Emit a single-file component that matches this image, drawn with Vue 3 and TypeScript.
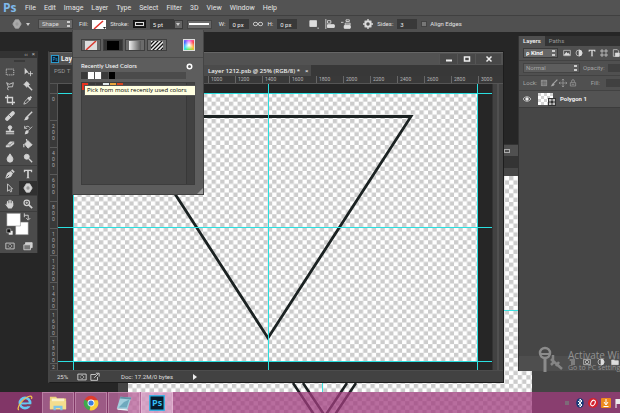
<script setup lang="ts">
import { ref } from 'vue'

const menus: string[] = ['File', 'Edit', 'Image', 'Layer', 'Type', 'Select', 'Filter', '3D', 'View', 'Window', 'Help']

const shapeMode = ref('Shape')
const strokeWidth = ref('5 pt')
const shapeW = ref('0 px')
const shapeH = ref('0 px')
const sides = ref('3')
const alignEdges = ref(false)
const layerKind = ref('Kind')
const blendMode = ref('Normal')

const icons: Record<string, string> = {
  marquee: '<path d="M1.5 2.5h9v7h-9z" stroke-dasharray="1.5 1"/>',
  move: '<path d="M2 1v8l2-2h3z" fill="currentColor" stroke="none"/><path d="M9 5v6M6 8h6"/>',
  lasso: '<path d="M2 2l3 2 5-2-1 5H4L2 2M4 7l-1 2 1 2"/>',
  wand: '<path d="M6 6l5 5" stroke-width="1.6"/><circle cx="4.500" cy="4" r="2.500" fill="currentColor"/><path d="M4.500 0v8M.5 4h8"/>',
  crop: '<path d="M3 0v9h9M0 3h9v9" stroke-width="1.600"/>',
  dropper: '<path d="M1 11l1-3 4-4 2 2-4 4z"/><path d="M6 3l3 3M7.500 4.500L10 2" stroke-width="2.500"/>',
  heal: '<path d="M2.500 9.500l7-7" stroke-width="4.500" stroke-linecap="round"/><path d="M5 5l2 2" stroke="#4b4b4b"/>',
  brush: '<path d="M11 1L5 7" stroke-width="1.700"/><path d="M5 6l2 2c-1 3-4 3-6 3 2-1 1-4 4-5z" fill="currentColor" stroke="none"/>',
  stamp: '<circle cx="6" cy="3" r="2.200" fill="currentColor"/><path d="M5 4h2v3h4v2H1V7h4zM1 10h10v1H1z" fill="currentColor" stroke="none"/>',
  history: '<path d="M11 2L6 7M2 4c1-3 5-3 6-1M2 1v3h3"/><path d="M5 6l2 2c-1 3-4 3-5 3 1-1 0-4 3-5z" fill="currentColor" stroke="none"/>',
  eraser: '<path d="M1 8l5-5h5v3L6 10H1z" fill="currentColor" stroke="none"/><path d="M1 7h5l5-4M6 7v3" stroke="#666" stroke-width=".7"/>',
  bucket: '<path d="M2 6l4-4 5 5-5 4z" fill="currentColor"/><path d="M4 0l2 6M1 6v4" stroke-width="1.400"/>',
  blur: '<path d="M6 1c2 3 3.500 4.500 3.500 6.500a3.500 3.500 0 0 1-7 0C2.500 5.500 4 4 6 1z" fill="currentColor"/>',
  dodge: '<circle cx="4.500" cy="4.500" r="3" fill="currentColor"/><path d="M7 7l4 4" stroke-width="1.600"/>',
  pen: '<path d="M1 11l2-6 4-2 2 2-2 4z" fill="currentColor"/><path d="M8 1l3 3" stroke-width="2"/><path d="M2 10l3-3" stroke="#444"/>',
  type: '<path d="M1 1h10v3h-1L9 2.500H7V10l1 1H4l1-1V2.500H3L2 4H1z" fill="currentColor" stroke="none"/>',
  arrow: '<path d="M3 1v9l2-2 2 3 1-1-1-3h2z"/>',
  polygon: '<path d="M4 1h4l3 5-3 5H4L1 6z" fill="currentColor"/><circle cx="6" cy="6" r="2" fill="#999" stroke="none"/>',
  hand: '<path d="M3 6V3M5 6V1.500M7 6V1.500M9 6V3" stroke-width="1.400" stroke-linecap="round"/><path d="M0 6l2 1V5h8v3L8 11.500H4z" fill="currentColor" stroke="none"/>',
  zoom: '<circle cx="4.500" cy="4.500" r="3.300" stroke-width="1.500"/><path d="M7 7l4 4" stroke-width="2"/><path d="M3 4.500h3M4.500 3v3"/>',
  mask: '<path d="M1 2.500h10v7H1z"/><circle cx="6" cy="6" r="2" stroke-dasharray="1 .7"/>',
  screen: '<path d="M3 2h8v6H3z" fill="currentColor"/><path d="M1 4.500h8v6H1z" fill="#777"/>',
  link: '<rect x="0.500" y="4" width="5" height="4" rx="2"/><rect x="6.500" y="4" width="5" height="4" rx="2"/>',
  ops: '<path d="M1 2h8v7H1z" fill="currentColor"/><path d="M10 11h2" />',
  align: '<path d="M1 0v12M3 2h4v3H3zM3 7h8v3H3z"/><path d="M3 7h8v3H3z" fill="currentColor"/>',
  arrange: '<path d="M0 4h3M6 1h4v2H6zM5 5h6v2H5zM4 8h7v3H4z"/><path d="M4 8h7v3H4z" fill="currentColor"/>',
  gear: '<circle cx="6" cy="6" r="3.300" stroke-width="2.400"/><path d="M6 0v2M6 10v2M0 6h2M10 6h2M2 2l1 1M9 9l1 1M10 2L9 3M3 9l-1 1" stroke-width="1.600"/>',
  image: '<path d="M1 2h10v8H1z"/><path d="M2 9l3-4 2 2 1-1 2 3z" fill="currentColor"/>',
  adjust: '<circle cx="6" cy="6" r="4.500"/><path d="M6 1.500a4.500 4.500 0 0 1 0 9z" fill="currentColor"/>',
  frame: '<path d="M3 0v12M9 0v12M0 3h12M0 9h12"/>',
  smart: '<path d="M2 1h6l2 2v8H2z"/><path d="M5 6h6v5H5z" fill="currentColor"/>',
  pixels: '<path d="M2 2h8v8H2z" fill="#8a8a8a"/><path d="M2 5h8M2 7.500h8M5 2v8M7.500 2v8" stroke="#555" stroke-width=".6"/>',
  lockmove: '<path d="M6 0v12M0 6h12M4.500 2L6 0l1.500 2M4.500 10L6 12l1.500-2M2 4.500L0 6l2 1.500M10 4.500L12 6l-2 1.500"/>',
  lock: '<path d="M2 5.500h8v5H2z"/><path d="M4 5V3a2 2 0 0 1 4 0v2M4 8h4" />',
  eye: '<path d="M0 6c3-4.500 9-4.500 12 0-3 4.500-9 4.500-12 0z"/><circle cx="6" cy="6" r="2" fill="currentColor"/>',
}

const toolGroups: string[][] = [
  ['marquee', 'move', 'lasso', 'wand', 'crop', 'dropper'],
  ['heal', 'brush', 'stamp', 'history', 'eraser', 'bucket', 'blur', 'dodge'],
  ['pen', 'type', 'arrow', 'polygon'],
  ['hand', 'zoom'],
]

const topMarks: number[] = Array.from({ length: 16 }, (_, i) => i * 200)
const sideMarks: string[][] = [...Array.from({ length: 10 }, (_, i) => String(i * 200).split('')), ['2']]
const guidesX: number[] = [15, 210, 419]
const guidesY: number[] = [9, 143, 277]
const recent: string[] = ['#383838', '#ffffff', '#ffffff', '#3a3a3a', '#000000']
const preset: string[] = ['#e8321f', '#3a3a3a', '#3a3a3a', '#dfe8ea', '#e9a43a', '#d8441f']
</script>

<template>
  <div class="app">
    <nav class="menubar">
      <span class="logo">Ps</span>
      <button v-for="m in menus" :key="m" class="menu">{{ m }}</button>
    </nav>

    <div class="options">
      <button class="tool-current" aria-label="Polygon tool">
        <svg class="ico" viewBox="0 0 12 12" v-html="icons.polygon" /><i class="caret" />
      </button>
      <select v-model="shapeMode" class="mode updown" aria-label="Tool mode"><option>Shape</option></select>
      <span class="lab">Fill:</span>
      <button class="fill" aria-label="Fill colour"><svg viewBox="0 0 14 9"><path d="M2 9L11 1" stroke="#e0322a" stroke-width="1.500" /><path d="M11 7h3l-1.500 2z" fill="#222" /></svg></button>
      <span class="lab">Stroke:</span>
      <button class="stroke" aria-label="Stroke colour"><i /></button>
      <input v-model="strokeWidth" class="field wide" aria-label="Stroke width" />
      <button class="drop" aria-label="Stroke width presets"><i class="caret" /></button>
      <button class="line" aria-label="Stroke type"><i /></button>
      <label class="lab size" for="w">W:</label>
      <input id="w" v-model="shapeW" class="field" />
      <svg class="ico link" viewBox="0 0 12 12" v-html="icons.link" />
      <label class="lab" for="h">H:</label>
      <input id="h" v-model="shapeH" class="field" />
      <span class="ops">
        <button v-for="n in ['ops', 'align', 'arrange']" :key="n" :aria-label="n"><svg class="ico" viewBox="0 0 12 12" v-html="icons[n]" /></button>
      </span>
      <button class="gearbtn" aria-label="Settings"><svg class="ico" viewBox="0 0 12 12" v-html="icons.gear" /></button>
      <label class="lab" for="sides">Sides:</label>
      <input id="sides" v-model="sides" class="field" />
      <label class="lab check"><input v-model="alignEdges" type="checkbox" />Align Edges</label>
    </div>

    <main class="desk">
      <section class="back-window">
        <header><i /></header>
        <div class="back-tabs" />
        <div class="back-ruler" />
        <svg class="back-art" aria-hidden="true">
          <defs>
            <pattern id="checkB" width="8.660" height="8.660" patternUnits="userSpaceOnUse">
              <rect width="9" height="9" fill="#fff" /><path d="M0 0h4.330v4.330H0zM4.330 4.330h4.330v4.330H4.330z" fill="#ccc" />
            </pattern>
          </defs>
          <rect width="100%" height="100%" fill="url(#checkB)" />
          <path d="M175 207L197 240L219 207M165 207L197 255M228 207L196 255" fill="none" stroke="#1b2122" stroke-width="2.500" />
          <path d="M194.500 207v9M376 134.500h14" stroke="#3fe0e0" />
        </svg>
      </section>

      <section class="doc">
        <header class="title">
          <svg class="psicon" viewBox="0 0 9 9"><rect x=".5" y=".5" width="8" height="8" fill="#0b1c2c" stroke="#2aa4dc" /><text x="2" y="6.500" font-size="5" fill="#38b8f0">Ps</text></svg>
          <b>Layer</b>
          <button class="wb" aria-label="Minimize"><svg viewBox="0 0 8 8"><path d="M1 5.500h6" stroke-width="2" /></svg></button>
          <button class="wb" aria-label="Maximize"><svg viewBox="0 0 8 8"><path d="M1.500 2h5v4h-5z" stroke-width="1.500" /></svg></button>
          <button class="wb close" aria-label="Close"><svg viewBox="0 0 8 8"><path d="M1.500 1.500l5 5M6.500 1.500l-5 5" stroke-width="1.500" /></svg></button>
        </header>
        <div class="tabs">
          <button class="tab first">PSD T</button>
          <button class="tab on">Layer 1212.psb @ 25% (RGB/8) *<span>×</span></button>
        </div>
        <div class="hruler"><i class="corner" /><span v-for="n in topMarks" :key="n">{{ n }}</span></div>
        <div class="view">
          <div class="vruler">
            <div v-for="(d, i) in sideMarks" :key="i"><span v-for="(c, j) in d" :key="j">{{ c }}</span></div>
          </div>
          <svg class="art" aria-hidden="true">
            <defs>
              <pattern id="checkA" x="15" y="9" width="8.660" height="8.660" patternUnits="userSpaceOnUse">
                <rect width="9" height="9" fill="#fff" /><path d="M0 0h4.330v4.330H0zM4.330 4.330h4.330v4.330H4.330z" fill="#ccc" />
              </pattern>
            </defs>
            <rect x="15" y="9" width="404" height="269" fill="url(#checkA)" />
            <path d="M67 32.500H353L210 254Z" fill="none" stroke="#1b2222" stroke-width="2.800" />
            <g fill="#2adfe0" shape-rendering="crispEdges">
              <rect v-for="y in guidesY" :key="'y' + y" x="0" :y="y" width="100%" height="1" />
              <rect v-for="x in guidesX" :key="'x' + x" :x="x" y="0" width="1" height="100%" />
            </g>
          </svg>
          <div class="vscroll"><i /></div>
        </div>
        <footer class="status">
          <span class="pct">25%</span>
          <svg class="ico" viewBox="0 0 12 12" v-html="icons.mask" />
          <svg class="ico" viewBox="0 0 12 12"><path d="M1 3h6M1 3v7h8V6M5 7l5-5M7 1.500h4v4" /></svg>
          <span class="size-info">Doc: 17.2M/0 bytes</span>
          <i class="play" />
        </footer>
      </section>

      <aside class="toolbox">
        <header><span>‹‹</span><span>×</span></header>
        <div class="grip" />
        <div v-for="(g, i) in toolGroups" :key="i" class="group">
          <button v-for="t in g" :key="t" :class="{ active: t === 'polygon' }" :aria-label="t">
            <svg class="ico" viewBox="0 0 12 12" v-html="icons[t]" />
          </button>
        </div>
        <svg class="swatches" viewBox="0 0 38 26">
          <path d="M16 10h13v13H16z" fill="#fff" stroke="#777" stroke-width=".5" />
          <path d="M7 1h14v13H7z" fill="#fff" stroke="#777" stroke-width=".5" />
          <path d="M25 3h4v4M25 1v4M27 6l2 2 2-2" fill="none" stroke="#ccc" />
          <path d="M9 19h4v4H9z" fill="#eee" /><path d="M7 17h4v4H7z" fill="#111" stroke="#ccc" stroke-width=".6" />
        </svg>
        <div class="group modes">
          <button aria-label="Quick mask"><svg class="ico" viewBox="0 0 12 12" v-html="icons.mask" /></button>
          <button aria-label="Screen mode"><svg class="ico" viewBox="0 0 12 12" v-html="icons.screen" /></button>
        </div>
      </aside>

      <section class="popup">
        <div class="kinds">
          <button aria-label="No color"><svg viewBox="0 0 12 9"><rect width="12" height="9" fill="#ddd" /><path d="M1 9L11 0" stroke="#d9392f" stroke-width="1.500" /></svg></button>
          <button class="on" aria-label="Solid color"><svg viewBox="0 0 12 9"><rect width="12" height="9" fill="#000" /></svg></button>
          <button aria-label="Gradient"><svg viewBox="0 0 12 9"><defs><linearGradient id="gr"><stop offset="0" stop-color="#eee" /><stop offset="1" stop-color="#555" /></linearGradient></defs><rect width="12" height="9" fill="url(#gr)" /></svg></button>
          <button aria-label="Pattern"><svg viewBox="0 0 12 9"><rect width="12" height="9" fill="#eee" /><path d="M-1 4L4-1M-1 8L8-1M1 10L12-1M5 10l8-8M9 10l4-4" stroke="#111" stroke-width="1.300" /></svg></button>
          <button class="picker" aria-label="Color picker"><i /></button>
        </div>
        <div class="recent-head"><span>Recently Used Colors</span><svg class="ico" viewBox="0 0 12 12"><circle cx="6" cy="6" r="3" stroke-width="2" /></svg></div>
        <div class="strip"><i v-for="(c, i) in recent" :key="i" :style="{ background: c }" /></div>
        <div class="list"><div class="cells"><i v-for="(c, i) in preset" :key="i" :style="{ background: c }" /></div><div class="bar" /></div>
        <div class="tooltip" role="tooltip">Pick from most recently used colors</div>
        <i class="grow" />
      </section>

      <aside class="layers">
        <div class="ptabs"><button class="on">Layers</button><button>Paths</button></div>
        <div class="prow filter">
          <select v-model="layerKind" class="updown" aria-label="Filter layers"><option value="Kind">ρ Kind</option></select>
          <button v-for="n in ['image', 'adjust', 'type', 'frame', 'smart']" :key="n" :aria-label="n"><svg class="ico" viewBox="0 0 12 12" v-html="icons[n]" /></button>
        </div>
        <div class="prow blend">
          <select v-model="blendMode" class="updown" aria-label="Blend mode"><option>Normal</option></select>
          <span>Opacity:</span><i class="dark" />
        </div>
        <div class="prow locks">
          <span>Lock:</span>
          <button v-for="n in ['pixels', 'brush', 'lockmove', 'lock']" :key="n" :aria-label="n"><svg class="ico" viewBox="0 0 12 12" v-html="icons[n]" /></button>
          <span class="fl">Fill:</span><i class="dark" />
        </div>
        <div class="layer">
          <svg class="ico" viewBox="0 0 12 12" v-html="icons.eye" />
          <svg class="thumb" viewBox="0 0 18 13">
            <rect width="15" height="12" fill="#fff" /><path d="M0 0h3v3H0zM6 0h3v3H6zM3 3h3v3H3zM9 3h3v3H9zM0 6h3v3H0zM6 6h3v3H6zM3 9h3v3H3zM9 9h3v3H9zM12 0h3v3h-3z" fill="#d4d4d4" />
            <rect x="10" y="5" width="8" height="8" fill="#333" /><path d="M12 7h4v4h-4z" fill="none" stroke="#ddd" stroke-width=".8" /><path d="M11 6h2v2h-2zM15 6h2v2h-2zM11 10h2v2h-2zM15 10h2v2h-2z" fill="#bbb" />
          </svg>
          <b>Polygon 1</b>
        </div>
        <div class="pfoot">
          <svg class="ico" viewBox="0 0 12 12"><path d="M1 3h8M3 6h6M3 9h6" /></svg>
          <svg class="ico" viewBox="0 0 12 12"><path d="M1 2h10v8H1z" /><circle cx="6" cy="6" r="2.500" /></svg>
          <svg class="ico" viewBox="0 0 12 12" v-html="icons.adjust" />
          <svg class="ico" viewBox="0 0 12 12"><path d="M1 3h4l1 1h5v6H1z" fill="currentColor" /></svg>
        </div>
      </aside>

      <div class="activate">
        <svg viewBox="0 0 28 28">
          <circle cx="7" cy="7" r="5" fill="none" stroke="#8b8b8b" stroke-width="2.500" /><path d="M2 8h10" stroke="#8b8b8b" stroke-width="2" /><path d="M7 12v14" stroke="#8b8b8b" stroke-width="3" />
          <path d="M13 13l11 10M15 9v8l-2 2M18 20l3-4" fill="none" stroke="#858585" stroke-width="2.500" />
        </svg>
        <p><span>Activate Windows</span><small>Go to PC settings to activate</small></p>
      </div>
    </main>

    <footer class="taskbar">
      <button class="task" aria-label="Internet Explorer">
        <svg viewBox="0 0 20 20"><circle cx="10" cy="10" r="5.700" fill="none" stroke="#66c8f2" stroke-width="3" /><path d="M5 10.500h11" stroke="#66c8f2" stroke-width="2.200" /><path d="M11 13.500h7v-2h-6z" fill="#82405f" /><path d="M3 18C0 14 9 4 15 2.500c3-.5 3 1.500 2 3" fill="none" stroke="#f3c24b" stroke-width="1.400" /></svg>
      </button>
      <button class="task open" aria-label="File Explorer">
        <svg viewBox="0 0 20 20"><path d="M1 3h7l1 2h10v12H1z" fill="#eed27a" /><path d="M3 5h14v4H3z" fill="#fbf1c8" /><path d="M1 8h18v9H1z" fill="#f5dd8d" /><path d="M5 18v-5h10v5h-2.500v-2.500h-5V18z" fill="#7fc4e6" /></svg>
      </button>
      <button class="task open" aria-label="Chrome">
        <svg viewBox="0 0 20 20"><circle cx="10" cy="10" r="8" fill="#e03c2d" /><path d="M10 10L3 6a8 8 0 0 0 5.500 12z" fill="#3fa94d" /><path d="M10 10h0l-1.500 8A8 8 0 0 0 17.500 7H10z" fill="#f8ce35" /><circle cx="10" cy="10" r="3.800" fill="#fff" /><circle cx="10" cy="10" r="2.900" fill="#3b7de0" /></svg>
      </button>
      <button class="task open" aria-label="Notes">
        <svg viewBox="0 0 20 20"><path d="M6 3l12 1-4 13-12-1z" fill="#a3cfdd" /><path d="M2 16l12 1 .500 1.500L3 17.500z" fill="#e9f4f7" /><path d="M6 3l12 1-.5 2-12-1z" fill="#5f93a6" /><path d="M10 9l6-3-3 9-9 0z" fill="#6fa9bd" /></svg>
      </button>
      <button class="task open active" aria-label="Photoshop">
        <svg viewBox="0 0 20 20"><rect x="2" y="2" width="16" height="16" fill="#081a2b" stroke="#2fb5ea" stroke-width="1.500" /><text x="4.500" y="13.500" font-size="10" font-weight="700" fill="#35bdf2">Ps</text></svg>
      </button>
      <div class="tray">
        <svg viewBox="0 0 10 10"><rect x="3" y="3" width="4" height="4" fill="#7d6a78" /></svg>
        <svg viewBox="0 0 10 10"><ellipse cx="5" cy="5" rx="3.800" ry="4.800" fill="#173a78" /><path d="M3 3l4 4-2 2V1l2 2-4 4" fill="none" stroke="#fff" /></svg>
        <svg viewBox="0 0 10 10"><circle cx="5" cy="5" r="5" fill="#d3222e" /><ellipse cx="5" cy="5" rx="2" ry="3" fill="none" stroke="#fff" transform="rotate(30 5 5)" /></svg>
        <svg viewBox="0 0 10 10"><rect width="10" height="10" rx="1" fill="#ee8a1d" /><path d="M5 1v5M3 4l2 3 2-3M2.500 8.500h5" fill="none" stroke="#fff" /></svg>
        <svg viewBox="0 0 10 10"><path d="M2 1v9" stroke="#fff" /><path d="M2 1h7v5H2z" fill="#eee" /></svg>
      </div>
    </footer>
  </div>
</template>

<style>
html, body { margin: 0; height: 100%; overflow: hidden; }
#app { height: 100%; }
</style>

<style scoped>
* { box-sizing: border-box; }
.app { height: 100vh; display: flex; flex-direction: column; overflow: hidden; position: relative; background: #262626; color: #ddd; font: 6px/8px Roboto, "Noto Sans", sans-serif; }
button, input, select { font: inherit; color: inherit; background: none; border: 0; padding: 0; margin: 0; min-width: 0; appearance: none; border-radius: 0; outline: 0; }
button { display: inline-flex; align-items: center; justify-content: center; white-space: nowrap; }
svg { display: block; }
svg text { font-family: "Open Sans", sans-serif; }
.ico { width: 10px; height: 10px; fill: none; stroke: currentColor; stroke-width: 1; flex: none; }
.caret { border: 2px solid transparent; border-top: 3px solid #ccc; border-bottom: 0; }
select.updown { flex: none; background-image: linear-gradient(#ccc, #ccc), linear-gradient(#ccc, #ccc); background-size: 3px 2px; background-position: right 2px top 1px, right 2px bottom 1px; background-repeat: no-repeat; }

.menubar { flex: none; height: 15px; display: flex; align-items: center; gap: 8px; padding-left: 3px; background: #535353; font-size: 7px; }
.logo { font: 700 12px/14px "Open Sans", sans-serif; color: #7fb9ea; width: 14px; }
.menu { color: #e4e4e4; }

.options { flex: none; height: 17px; display: flex; align-items: center; gap: 4px; padding-left: 12px; background: #505050; border-top: 1px solid #404040; white-space: nowrap; }
.tool-current { gap: 4px; color: #aaa; margin-right: 4px; }
.mode { width: 35px; height: 10px; padding-left: 3px; background-color: #6a6a6a; border: 1px solid #444; line-height: 8px; margin-right: 2px; }
.lab { color: #e2e2e2; }
.fill { width: 14px; height: 9px; background: #fff; }
.fill svg { width: 14px; height: 9px; }
.stroke { width: 13px; height: 8px; background: #1c1c1c; border: 1px solid #111; }
.stroke i { width: 9px; height: 4px; border: 1px solid #ddd; }
.field { width: 20px; height: 10px; background: #393939; padding-left: 3px; color: #eee; }
.wide { width: 24px; }
.drop { width: 9px; height: 9px; background: #666; border: 1px solid #3a3a3a; margin-left: -4px; }
.line { width: 25px; height: 9px; background: #6a6a6a; border: 1px solid #444; }
.line i { width: 20px; height: 2px; background: #fff; }
.size { margin-left: 3px; }
.ops { display: flex; gap: 6px; margin: 0 8px; }
.check { display: flex; align-items: center; gap: 3px; }
.check input { width: 6px; height: 6px; background: #777; border: 1px solid #444; }

.desk { flex: 1; position: relative; min-height: 0; z-index: 0; }

.back-window { position: absolute; left: 118px; top: 112px; right: 0; bottom: -21px; display: grid; grid-template: 12px 12px 8px 1fr / 10px 1fr 88px; background: #444; }
.back-window header { grid-column: 1 / -1; background: #505050; display: flex; justify-content: flex-end; align-items: center; padding-right: 110px; border-top: 1px solid #333; }
.back-window header i { width: 6px; height: 4px; border: 1px solid #aaa; }
.back-tabs { grid-column: 1 / -1; background: #343434; }
.back-ruler { grid-column: 1 / -1; background: #484848; }
.back-art { grid-column: 2; grid-row: 4; width: 100%; height: 100%; }

.doc { position: absolute; left: 48px; top: 19px; right: 116px; bottom: 9px; display: flex; flex-direction: column; background: #3a3a3a; border: 1px solid #1d1d1d; border-left: 2px solid #454545; }
.title { flex: none; height: 13px; display: flex; align-items: center; background: #525252; padding-left: 1px; border-top: 1px solid #666; }
.title b { flex: 1; margin-left: 2px; color: #eee; font-size: 7px; }
.psicon { width: 8px; height: 8px; }
.wb { width: 18px; height: 10px; background: #484848; border-left: 1px solid #555; }
.wb svg { width: 8px; height: 8px; fill: none; stroke: #eee; }
.close { width: 26px; margin-right: 2px; }
.tabs { flex: none; height: 11px; display: flex; background: #383838; align-items: flex-end; }
.tab { height: 11px; padding: 0 4px; color: #999; }
.tab.first { width: 153px; justify-content: flex-start; }
.tab.on { background: #4b4b4b; color: #eee; font-family: "Open Sans", sans-serif; font-weight: 600; gap: 5px; padding: 0 3px 0 5px; }
.hruler { flex: none; height: 8px; display: flex; background: #393939; overflow: hidden; color: #b5b5b5; font-size: 5px; line-height: 7px; border-bottom: 1px solid #555; }
.corner { flex: none; width: 23px; border-right: 1px solid #555; }
.hruler span { flex: none; width: 27px; border-left: 1px solid #666; padding-left: 2px; }
.hruler span:nth-child(2) { border: 0; }
.view { flex: 1; min-height: 0; display: flex; background: #262626; }
.vruler { flex: none; width: 8px; padding-top: 9px; overflow: hidden; background: #393939; border-right: 1px solid #555; color: #aaa; font-size: 5px; line-height: 6px; text-align: center; }
.vruler div { height: 27px; padding-top: 2px; border-top: 1px solid #5a5a5a; }
.vruler div:last-child { height: 7px; padding-top: 0; }
.vruler span { display: block; }
.art { flex: 1; height: 100%; min-width: 0; }
.vscroll { flex: none; width: 11px; background: #424242; border-left: 1px solid #333; padding: 0 4px; }
.vscroll i { display: block; height: 100%; background: #505050; }
.status { flex: none; height: 12px; display: flex; align-items: center; gap: 3px; background: #424242; padding-left: 7px; color: #ddd; border-top: 1px solid #4c4c4c; }
.pct { width: 17px; }
.size-info { margin-left: 18px; width: 69px; }
.play { border: 3px solid transparent; border-left: 4px solid #eee; border-right: 0; }

.toolbox { position: absolute; left: 0; top: 19px; width: 38px; background: #4b4b4b; border-right: 1px solid #333; }
.toolbox header { height: 7px; display: flex; justify-content: flex-end; gap: 4px; padding-right: 2px; background: #333; color: #bbb; line-height: 6px; }
.grip { height: 2px; margin: 2px 12px 2px 14px; background: #3a3a3a; }
.group { display: grid; grid-template-columns: 18px 18px; grid-auto-rows: 14px; padding: 1px 1px 0; border-bottom: 1px solid #3d3d3d; color: #d2d2d2; }
.group .active { background: #303030; }
.swatches { width: 37px; height: 26px; }
.modes { border: 0; }

.popup { position: absolute; left: 72px; top: -2px; width: 132px; padding: 9px 8px 9px; background: #5d5d5d; border: 1px solid #444; border-top: 0; }
.kinds { display: flex; gap: 2px; }
.kinds button { width: 20px; height: 12px; border: 1px solid #3f3f3f; background: #6b6b6b; }
.kinds svg { width: 12px; height: 9px; }
.kinds .on { background: #333; }
.kinds .picker { width: 12px; height: 12px; margin: 0 0 0 auto; border: 1px solid #ddd; }
.picker i { width: 10px; height: 10px; background: radial-gradient(circle, #fff 5%, #fff0 70%), conic-gradient(#e6f, #f44, #fb3, #6e4, #3df, #46f, #e6f); }
.recent-head { display: flex; justify-content: space-between; align-items: center; height: 17px; margin: 6px -8px 0; padding: 0 9px 0 8px; border-top: 1px solid #4a4a4a; color: #fff; font-family: Lato, sans-serif; }
.recent-head .ico { width: 9px; height: 9px; }
.strip { height: 7px; width: 105px; background: #4b4b4b; display: flex; gap: 1px; margin-top: -2px; }
.strip i, .cells i { width: 6px; height: 7px; }
.list { height: 103px; margin-top: 3px; display: flex; background: #474747; border: 1px solid #3d3d3d; }
.cells { flex: 1; display: flex; gap: 1px; }
.bar { width: 8px; background: #414141; border-left: 1px solid #383838; }
.tooltip { position: absolute; left: 11px; top: 55px; width: 112px; height: 11px; padding: 0 2px; background: #ffffe1; border: 1px solid #555; color: #000; font-family: "Open Sans", "Noto Sans", sans-serif; line-height: 9px; white-space: nowrap; }
.grow { position: absolute; right: 0; bottom: 0; border: 3px solid #999; border-top-color: transparent; border-left-color: transparent; }

.layers { position: absolute; left: 518px; right: 0; top: 4px; bottom: 21px; display: flex; flex-direction: column; background: #464646; border-left: 1px solid #333; overflow: hidden; }
.ptabs { flex: none; height: 10px; display: flex; background: #333; }
.ptabs button { padding: 0 4px; color: #999; }
.ptabs .on { background: #4f4f4f; color: #eee; font-weight: 600; }
.prow { flex: none; height: 15px; display: flex; align-items: center; background: #505050; padding-left: 4px; gap: 3px; border-bottom: 1px solid #424242; white-space: nowrap; }
.prow .ico { width: 8px; height: 8px; }
.filter select { width: 35px; height: 10px; padding-left: 2px; background-color: #666; border: 1px solid #3b3b3b; font-weight: 600; color: #fff; line-height: 8px; }
.filter { gap: 5px; color: #ddd; }
.blend select { width: 57px; height: 10px; padding-left: 2px; background-color: #5d5d5d; border: 1px solid #444; line-height: 8px; }
.blend, .locks { color: #a5a5a5; }
.dark { width: 20px; height: 8px; background: #404040; }
.locks { gap: 4px; }
.fl { margin-left: 11px; margin-right: 2px; }
.layer { flex: none; height: 17px; display: flex; align-items: center; background: #535353; padding-left: 4px; color: #f0f0f0; border-bottom: 1px solid #3c3c3c; }
.layer .ico { width: 8px; height: 8px; margin-right: 7px; }
.thumb { width: 18px; height: 13px; margin-right: 4px; }
.pfoot { margin-top: auto; height: 15px; display: flex; align-items: flex-start; justify-content: flex-end; gap: 6px; padding: 2px 1px 0 0; background: #4e4e4e; }
.pfoot .ico { width: 8px; height: 8px; }

.activate { position: absolute; left: 538px; right: 0; bottom: 16px; height: 30px; display: flex; gap: 2px; overflow: hidden; color: #929292; white-space: nowrap; font-family: "Open Sans", sans-serif; }
.activate svg { width: 28px; height: 28px; flex: none; }
.activate p { margin: 3px 0 0; }
.activate span { display: block; font-size: 10px; line-height: 13px; }
.activate small { display: block; font-size: 7px; line-height: 11px; }

.taskbar { flex: none; height: 21px; z-index: 1; display: flex; align-items: center; background: rgba(160, 60, 125, .75); gap: 1px; }
.task { width: 32px; height: 21px; }
.task svg { width: 18px; height: 18px; }
.task:first-child { margin-left: 9px; }
.open { background: rgba(255, 220, 240, .22); border: 1px solid rgba(255, 220, 240, .3); border-bottom: 0; }
.task.active { background: rgba(255, 235, 250, .45); }
.tray { margin-left: auto; display: flex; gap: 3px; margin-right: -4px; }
.tray svg { width: 10px; height: 10px; }
</style>
